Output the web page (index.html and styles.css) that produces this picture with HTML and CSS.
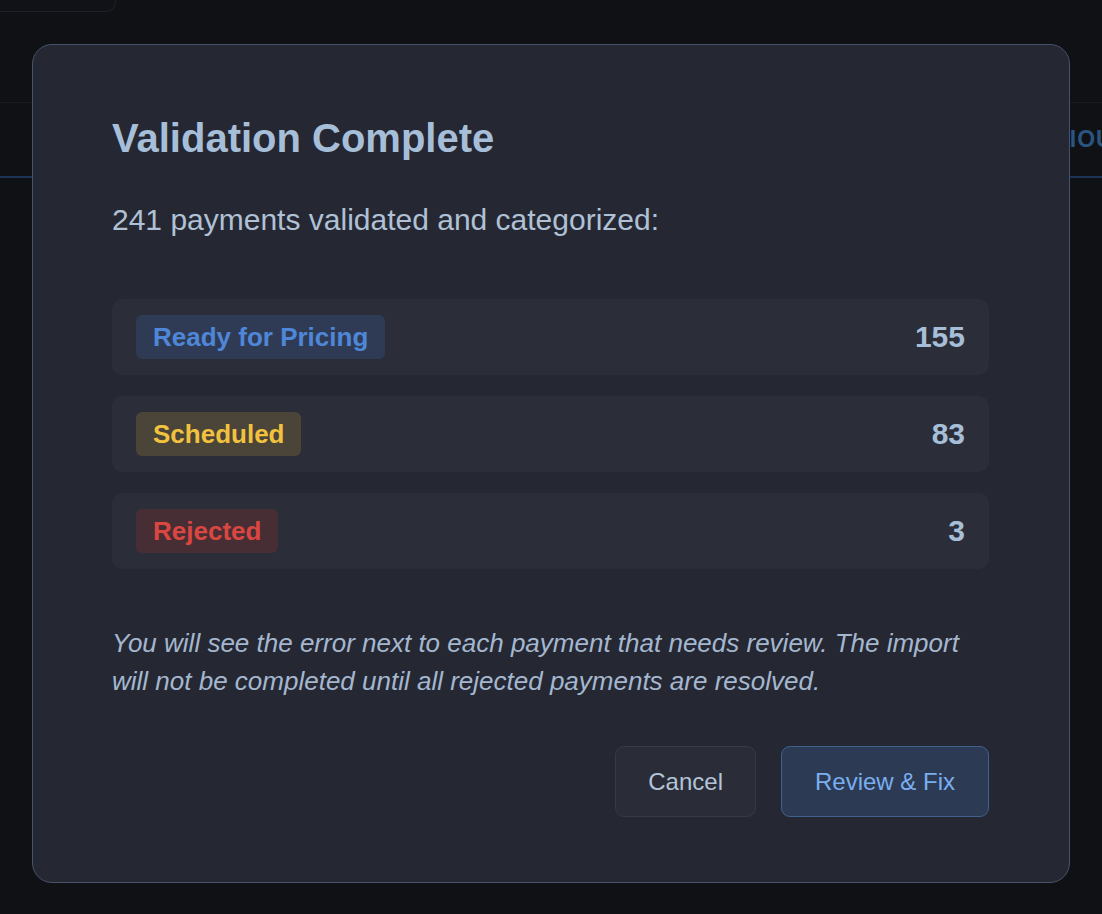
FILE: index.html
```html
<!DOCTYPE html>
<html>
<head>
<meta charset="utf-8">
<link rel="stylesheet" href="styles.css">
</head>
<body>
<div class="page">
  <div class="top-card"></div>
  <div class="header"></div>
  <div class="tabs">
    <span class="tab tab-right">PREVIOUS</span>
  </div>
</div>
<div class="overlay">
  <div class="modal">
    <h2 class="title">Validation Complete</h2>
    <p class="subtitle">241 payments validated and categorized:</p>
    <div class="list">
      <div class="row">
        <span class="badge badge-blue">Ready for Pricing</span>
        <span class="count">155</span>
      </div>
      <div class="row">
        <span class="badge badge-yellow">Scheduled</span>
        <span class="count">83</span>
      </div>
      <div class="row">
        <span class="badge badge-red">Rejected</span>
        <span class="count">3</span>
      </div>
    </div>
    <p class="note">You will see the error next to each payment that needs review. The import will not be completed until all rejected payments are resolved.</p>
    <div class="actions">
      <button class="btn btn-cancel">Cancel</button>
      <button class="btn btn-primary">Review &amp; Fix</button>
    </div>
  </div>
</div>
</body>
</html>
```
FILE: styles.css
```css
html, body {
  margin: 0;
  padding: 0;
  height: 100%;
  overflow: hidden;
}
body {
  background: #101115;
  font-family: "Liberation Sans", Arial, Helvetica, sans-serif;
}
.page {
  width: 100%;
}
.top-card {
  width: 115px;
  height: 11px;
  border-right: 1px solid #1f2128;
  border-bottom: 1px solid #1f2128;
  border-bottom-right-radius: 10px;
  background: #111217;
}
.header {
  height: 90px;
  border-bottom: 1px solid #191b21;
}
.tabs {
  height: 73px;
  border-bottom: 2px solid #1b3355;
  display: flex;
  align-items: center;
  justify-content: flex-end;
  white-space: nowrap;
}
.tab {
  font-size: 23px;
  font-weight: bold;
  color: #2a5580;
  letter-spacing: 1px;
}
.tab-right {
  margin-right: -28px;
}
.overlay {
  position: fixed;
  inset: 0;
  display: flex;
  justify-content: center;
  align-items: flex-start;
}
.modal {
  margin-top: 44px;
  width: 1038px;
  box-sizing: border-box;
  background: #252833;
  border: 1px solid #45536b;
  border-radius: 20px;
  padding: 70px 80px 65px 79px;
}
.title {
  margin: 0;
  font-size: 40px;
  line-height: 46px;
  font-weight: bold;
  color: #a7bed9;
}
.subtitle {
  margin: 41px 0 0;
  font-size: 30px;
  line-height: 35px;
  color: #b0c1d5;
}
.list {
  margin-top: 62px;
  display: flex;
  flex-direction: column;
  gap: 21px;
}
.row {
  display: flex;
  justify-content: space-between;
  align-items: center;
  background: #2b2e38;
  border-radius: 10px;
  padding: 16px 24px;
}
.badge {
  font-size: 26px;
  line-height: 30px;
  font-weight: bold;
  padding: 7px 17px;
  border-radius: 6px;
}
.badge-blue {
  background: #2f3b55;
  color: #4f87d8;
}
.badge-yellow {
  background: #4a4439;
  color: #f2c23f;
}
.badge-red {
  background: #472e35;
  color: #da4640;
}
.count {
  font-size: 30px;
  font-weight: bold;
  color: #a7bed9;
}
.note {
  margin: 55px 0 0;
  font-size: 26px;
  line-height: 38px;
  font-style: italic;
  color: #a4b7cf;
}
.actions {
  margin-top: 46px;
  display: flex;
  justify-content: flex-end;
  gap: 25px;
}
.btn {
  font-family: "Liberation Sans", Arial, Helvetica, sans-serif;
  font-size: 24px;
  line-height: 27px;
  padding: 21px 33px;
  border-radius: 9px;
  cursor: pointer;
}
.btn-cancel {
  background: #2a2d37;
  border: 1px solid #363a45;
  color: #b3c4d8;
  padding-left: 32px;
  padding-right: 32px;
}
.btn-primary {
  background: #2d3a53;
  border: 1px solid #3f6190;
  color: #79aef0;
}
```
